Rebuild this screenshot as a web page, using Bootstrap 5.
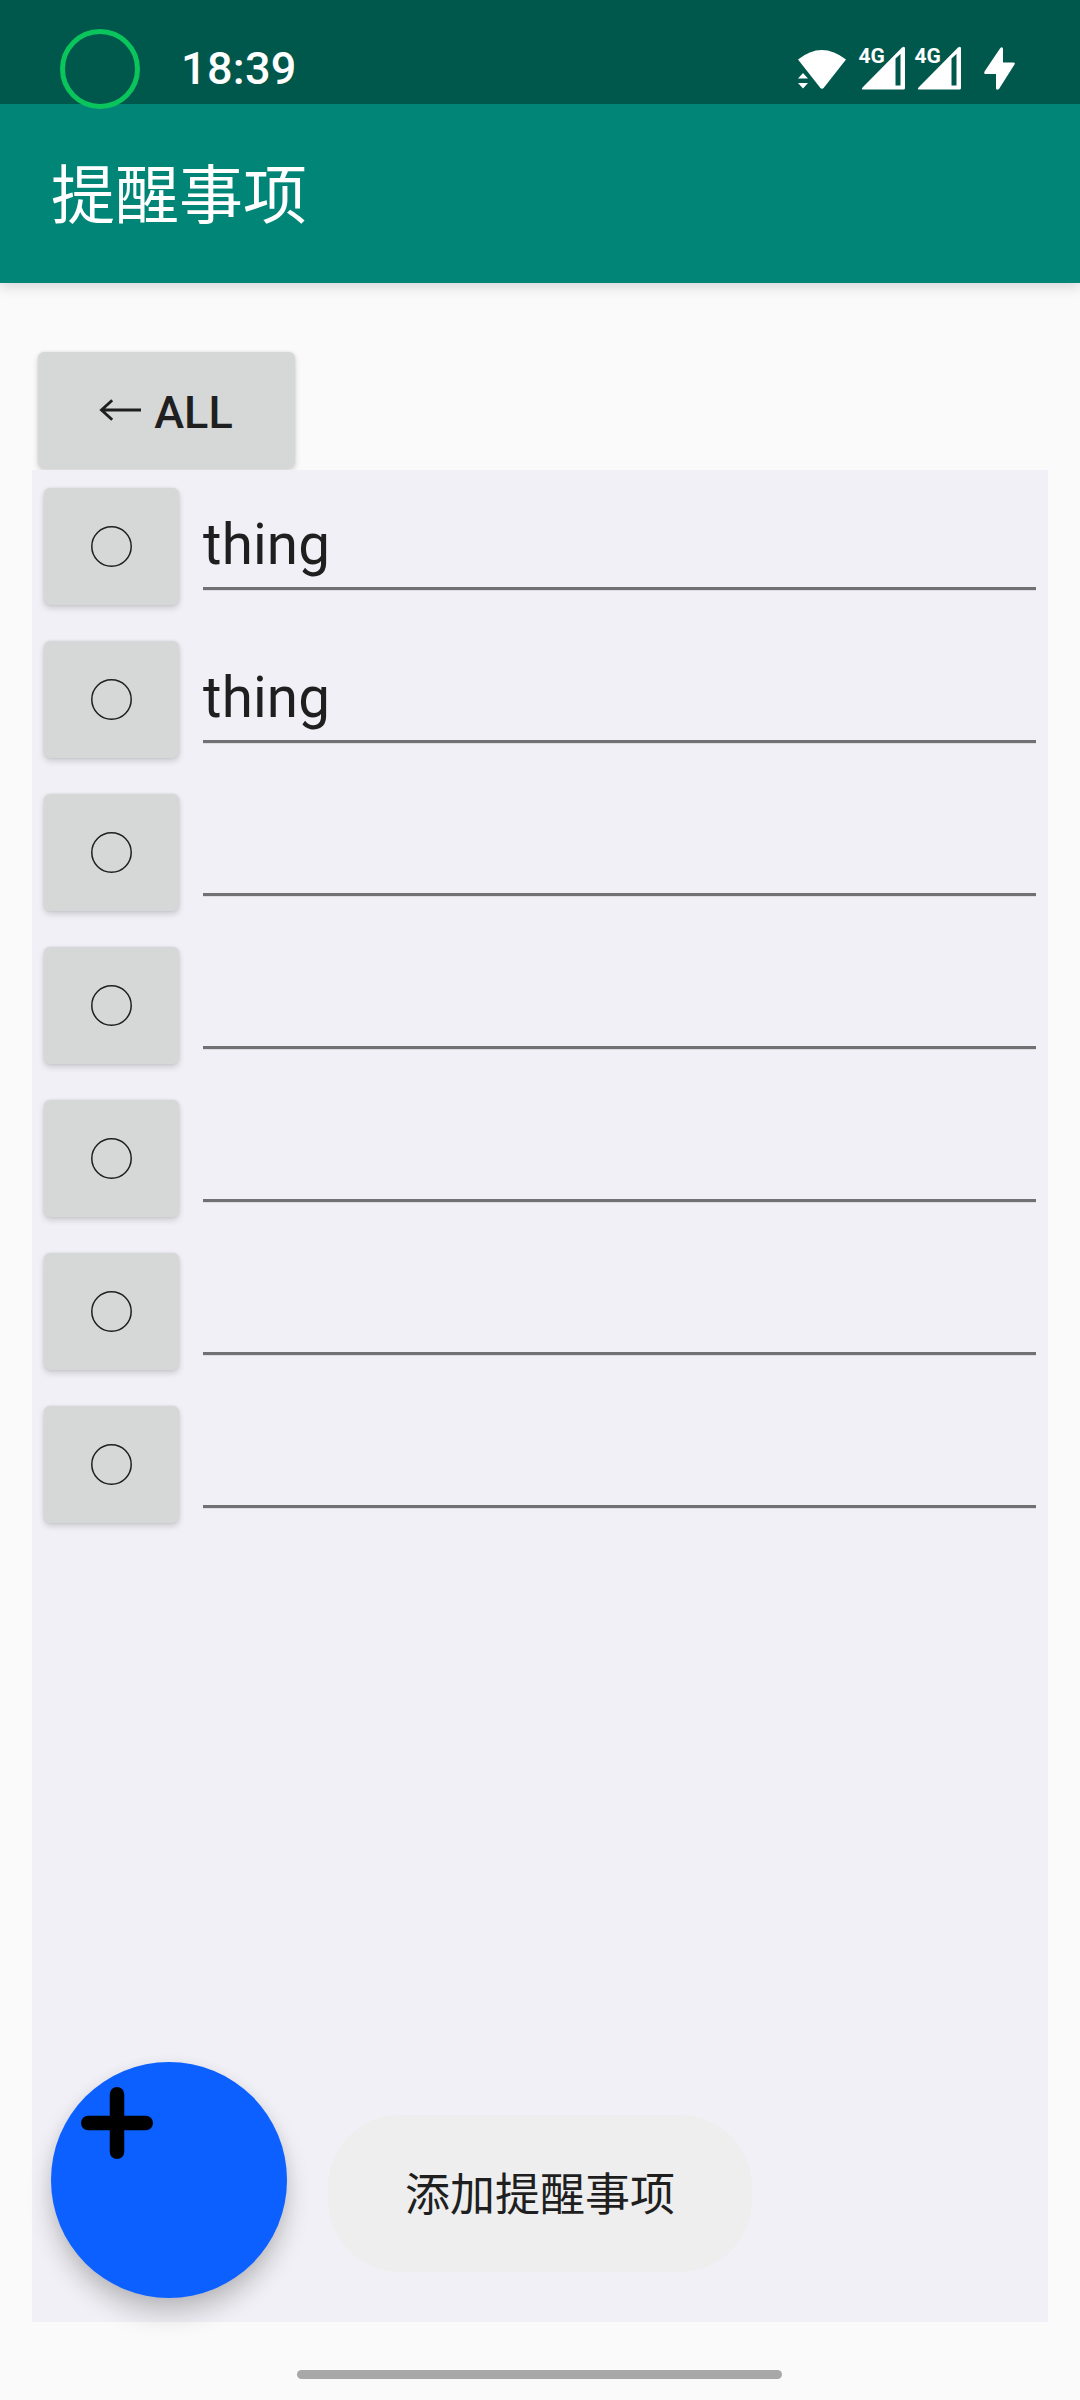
<!DOCTYPE html>
<html lang="zh-CN">
<head>
<meta charset="utf-8">
<meta name="viewport" content="width=device-width, initial-scale=1">
<title>提醒事项</title>
<link href="https://cdn.jsdelivr.net/npm/bootstrap@5.3.0/dist/css/bootstrap.min.css" rel="stylesheet">
<style>
html, body { height: 2400px; overflow: hidden; }
body { background: #fafafa; color: #1f1f1f; font-family: Roboto, "Noto Sans CJK SC", sans-serif; }
svg { display: block; overflow: visible; }
.screen { width: 1080px; height: 2400px; }
.statusbar { height: 104px; background: #00574b; color: #fff; padding: 28px 60px 0; z-index: 2; }
.camera-ring { width: 80px; height: 80px; margin-top: 1px; border: 5px solid #0ac45c; }
.clock { font-size: 45px; font-weight: 500; line-height: 53px; margin: 14px 0 0 41px; letter-spacing: .3px; }
.status-icons { width: 300px; height: 76px; margin-right: -60px; }
.appbar { height: 179px; background: #018577; color: #fff; padding: 7px 51px 0; box-shadow: 0 4px 12px rgba(0,0,0,.14); z-index: 1; }
.app-title { font-size: 64px; line-height: 80px; font-weight: 400; }
.main-area { padding: 69px 32px 0; }
.tile { background: #d6d8d7; border-radius: 6px; border: 0; color: #1f1f1f; box-shadow: 0 3px 6px rgba(0,0,0,.16), 0 0 3px rgba(0,0,0,.08); padding: 0; }
.tile-all { width: 257px; height: 116px; margin: 0 0 2px 5.500px; font-size: 45px; font-weight: 500; line-height: 53px; gap: 13px; }
.tile-all span { padding-top: 4px; }
.panel { height: 1852px; background: #f1f0f6; padding: 18px 12px 24px 11px; }
.rows { gap: 35px; }
.row-item { height: 118px; gap: 24px; }
.tile-check { width: 135px; height: 117px; margin-left: .5px; margin-right: .5px; }
.entry { height: 102px; border: 0; border-bottom: 3px solid #717174; border-radius: 0; background: none; padding: 24px 0 0; font-size: 56.500px; line-height: 67px; letter-spacing: .15px; color: #1f1f1f; box-shadow: 0 1px 0 rgba(0,0,0,.08); }
.bottom-actions { margin-left: 8px; gap: 41px; }
.fab { width: 236px; height: 236px; background: #0b60ff; border: 0; padding: 25px 0 0 30px; box-shadow: 0 16px 24px rgba(0,0,0,.2), 0 2px 14px rgba(0,0,0,.06); }
.pill { width: 424px; height: 157px; margin-top: 27px; border-radius: 72px; background: #eee; border: 0; font-size: 45px; line-height: 60px; color: #1f1f1f; padding: 4px 0 0; }
.homebar { width: 485px; height: 9px; background: #a8a8a8; margin: 48px 0 0 297px; }
</style>
</head>
<body>
<div class="screen d-flex flex-column">
  <header class="statusbar d-flex align-items-start position-relative flex-shrink-0">
    <div class="camera-ring rounded-circle flex-shrink-0"></div>
    <div class="clock">18:39</div>
    <svg class="status-icons ms-auto" viewBox="780 28 300 76" fill="#fff">
      <path d="M798 59.500Q821.700 40.500 846 59.500L824 87.500Q822 90 820 87.500Z"/>
      <path d="M803 73l5 5.500h-10zM798 83h10l-5 5.500z"/>
      <g id="signal">
        <path fill-rule="evenodd" d="M863 89.500Q861 89.500 862.500 87.500L902 47.500Q905 45.500 905 48.500V88Q905 89.500 903.500 89.500ZM895.500 58.500V85.500H900.500V54Z"/>
        <text x="858.500" y="62.700" font-size="21" font-weight="700" font-family="Roboto, sans-serif">4G</text>
      </g>
      <use href="#signal" x="56"/>
      <path d="M1001 47.500Q1002.800 46.800 1003 49V62.500H1013.500Q1015.500 62.700 1014.500 64.500L999 89Q996 91 996 88V74H985Q983.500 73.500 984.500 71.500L1000 48.500Z"/>
    </svg>
  </header>
  <nav class="appbar d-flex align-items-center position-relative flex-shrink-0">
    <h1 class="app-title mb-0">提醒事项</h1>
  </nav>
  <main class="main-area">
    <button class="tile tile-all d-flex align-items-center justify-content-center" type="button">
      <svg width="42" height="22" viewBox="0 0 42 22" fill="none" stroke="#1f1f1f" stroke-width="2.900"><path d="M42 11H2.500M13.200 1.200L2.500 11L13.200 20.800"/></svg>
      <span>ALL</span>
    </button>
    <section class="panel d-flex flex-column justify-content-between">
      <div class="rows d-flex flex-column" id="rows"></div>
      <div class="bottom-actions d-flex align-items-center">
        <button class="fab rounded-circle d-flex align-items-start" type="button" aria-label="添加">
          <svg width="72" height="72" viewBox="0 0 72 72" stroke="#000" stroke-width="14.500" stroke-linecap="round"><path d="M7.250 36H64.750M36 7.250V64.750"/></svg>
        </button>
        <button class="pill" type="button">添加提醒事项</button>
      </div>
    </section>
  </main>
  <div class="homebar rounded-pill"></div>
</div>
<script src="https://cdn.jsdelivr.net/npm/bootstrap@5.3.0/dist/js/bootstrap.bundle.min.js"></script>
<script>
const items = ["thing", "thing", "", "", "", "", ""];
document.getElementById("rows").innerHTML = items.map(t => `
  <div class="row-item d-flex align-items-start">
    <button class="tile tile-check d-flex align-items-center justify-content-center flex-shrink-0" type="button">
      <svg width="42" height="42" viewBox="0 0 42 42" fill="none" stroke="#1f1f1f" stroke-width="1.5"><circle cx="21.500" cy="20.500" r="19.700"/></svg>
    </button>
    <div class="entry flex-grow-1">${t}</div>
  </div>`).join("");
</script>
</body>
</html>
